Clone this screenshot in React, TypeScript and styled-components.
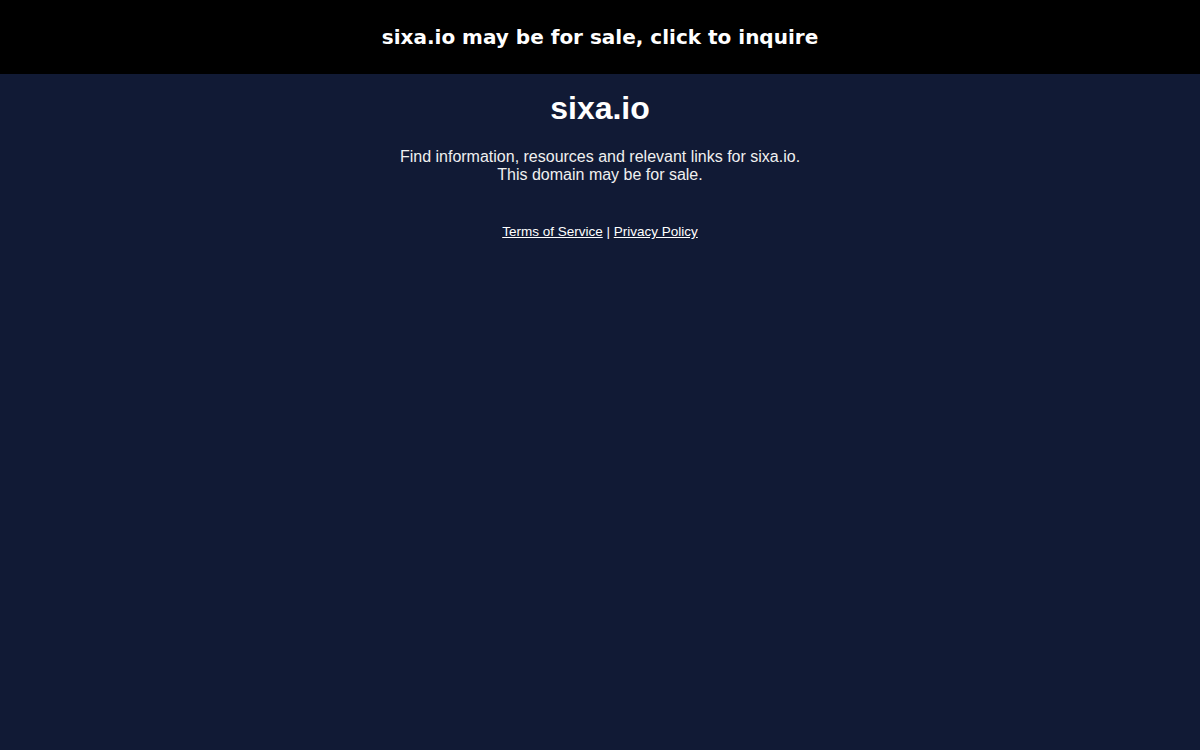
import React from "react";
import styled, { createGlobalStyle } from "styled-components";

const Global = createGlobalStyle`
  html, body { margin: 0; padding: 0; background: #111a35; }
  body { font-family: "Liberation Sans", Arial, sans-serif; color: #ffffff; }
`;

const Banner = styled.a`
  display: flex;
  align-items: center;
  justify-content: center;
  height: 74px;
  background: #000000;
  color: #ffffff;
  text-decoration: none;
  font-family: "DejaVu Sans", sans-serif;
  font-weight: bold;
  font-size: 20px;
`;

const Main = styled.main`
  display: flex;
  flex-direction: column;
  align-items: center;
  text-align: center;
  min-height: calc(100vh - 74px);
`;

const Title = styled.h1`
  margin: 16px 0 0;
  font-size: 32px;
  line-height: 37px;
  font-weight: bold;
`;

const Text = styled.p`
  margin: 21px 0 0;
  font-size: 16px;
  line-height: 18px;
  color: #f0f0f0;
`;

const Footer = styled.div`
  margin-top: 40px;
  font-size: 13.5px;
  line-height: 15px;
  color: #ffffff;
`;

const Link = styled.a`
  color: #ffffff;
  text-decoration: underline;
`;

export default function App() {
  return (
    <>
      <Global />
      <Banner href="#">sixa.io may be for sale, click to inquire</Banner>
      <Main>
        <Title>sixa.io</Title>
        <Text>
          Find information, resources and relevant links for sixa.io.
          <br />
          This domain may be for sale.
        </Text>
        <Footer>
          <Link href="#">Terms of Service</Link> | <Link href="#">Privacy Policy</Link>
        </Footer>
      </Main>
    </>
  );
}
